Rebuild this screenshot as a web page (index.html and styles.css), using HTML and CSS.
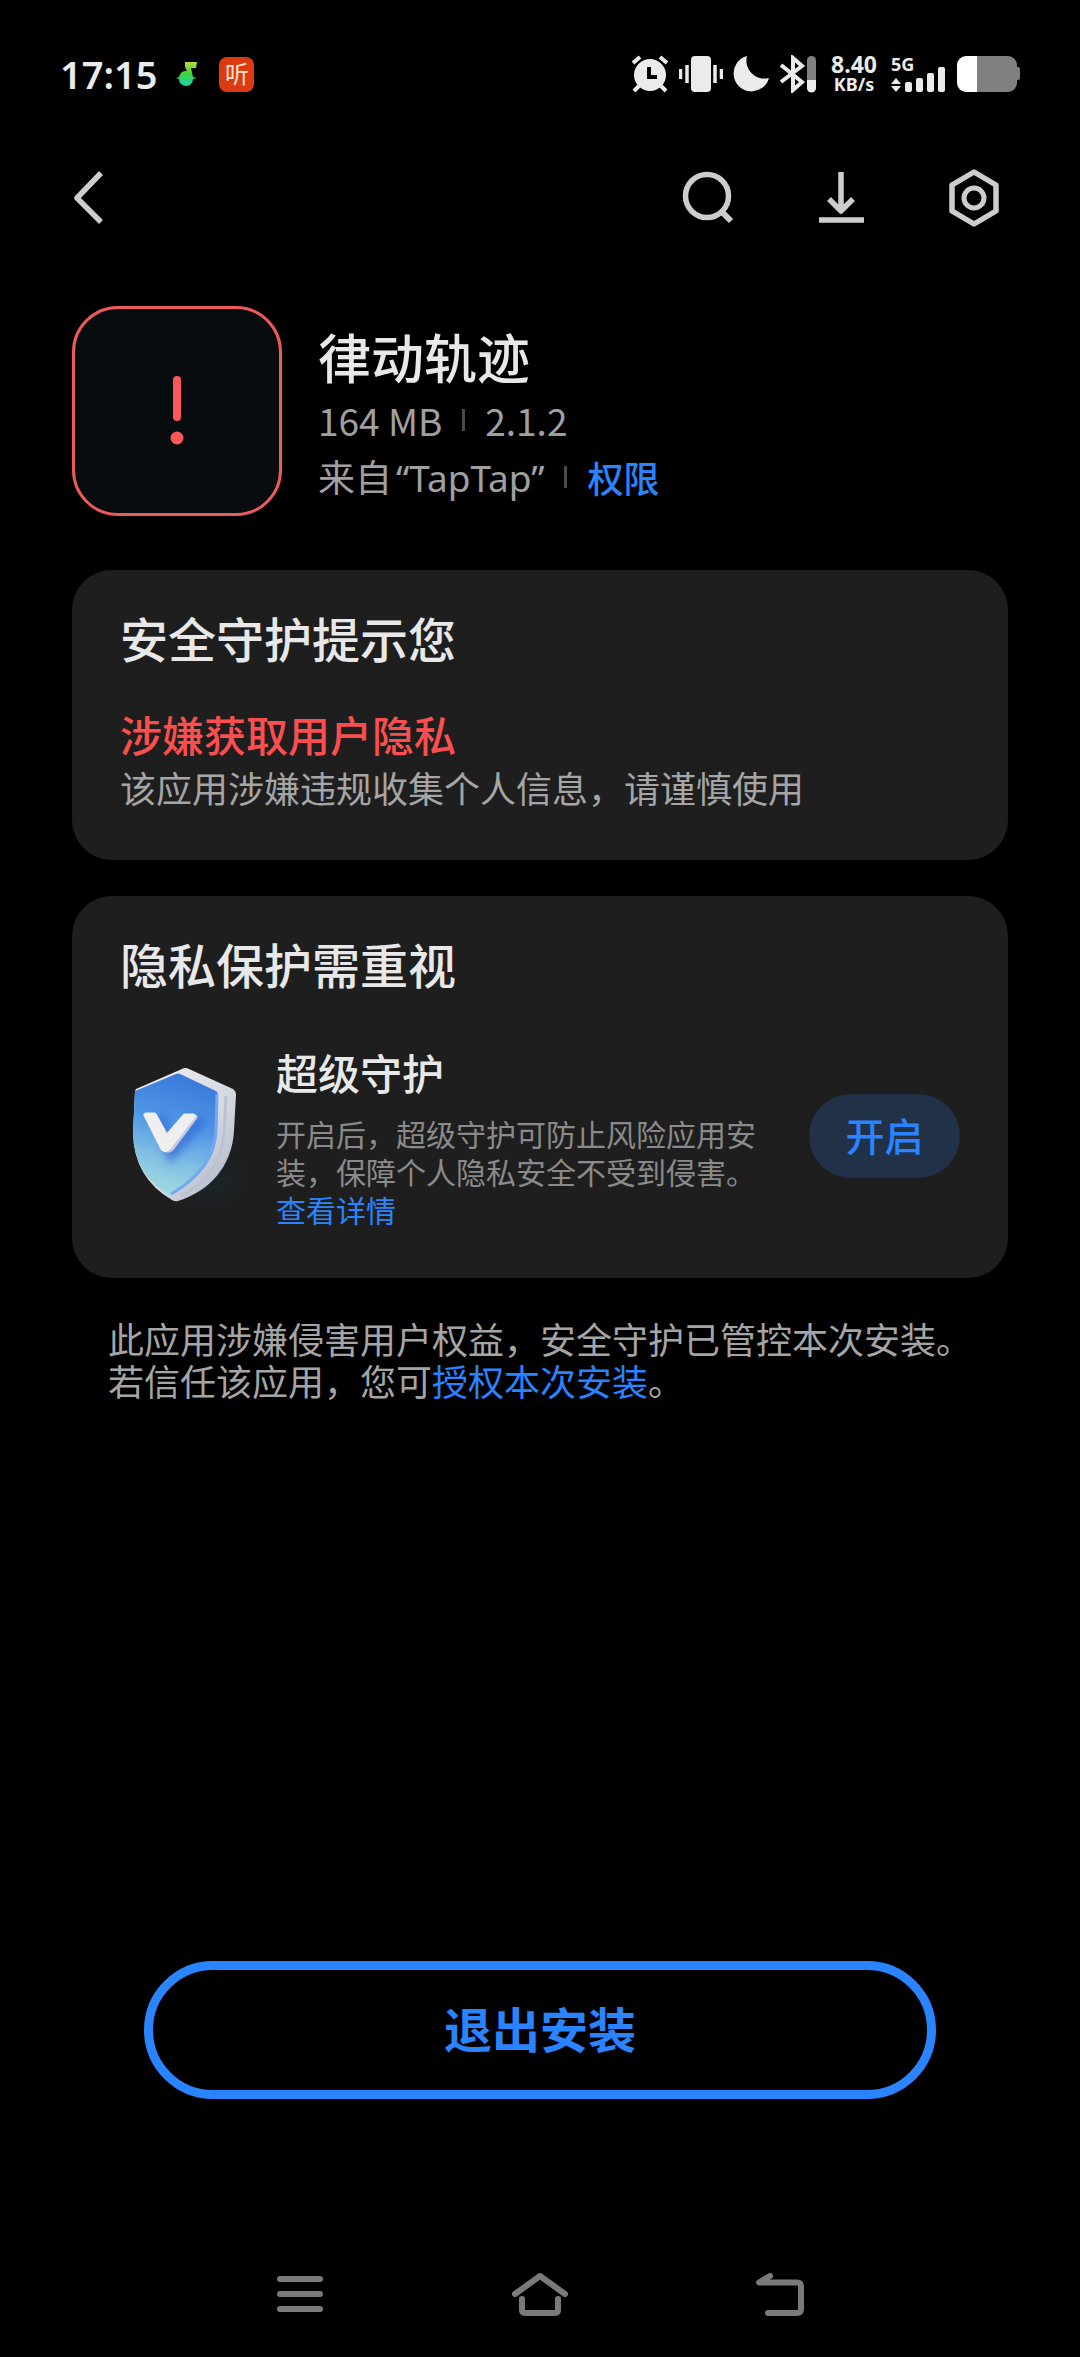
FILE: index.html
```html
<!DOCTYPE html>
<html lang="zh-CN">
<head>
    <meta charset="UTF-8">
    <meta name="viewport" content="width=device-width, initial-scale=1.0">
    <title>律动轨迹</title>
    <link rel="stylesheet" href="styles.css">
</head>
<body>

<!-- 状态栏 -->
<div class="status-bar">
    <div class="status-left">
        <span class="time">17:15</span>
        <svg class="music-icon" width="34" height="34" viewBox="0 0 34 34">
            <defs>
                <linearGradient id="note" x1="0" y1="0" x2="0" y2="1">
                    <stop offset="0" stop-color="#b4dc3c"/>
                    <stop offset="0.5" stop-color="#3fd23c"/>
                    <stop offset="1" stop-color="#1fd0b4"/>
                </linearGradient>
            </defs>
            <path fill="url(#note)" d="M14 5h12l-1 6h-5l2 9 4 1-4 1a7 7 0 0 1-14 0l-3-1 3-1a7 7 0 0 1 8-6l-2-4z"/>
        </svg>
        <span class="listen-icon">听</span>
    </div>
    <div class="status-right">
        <svg width="38" height="38" viewBox="0 0 38 38">
            <circle cx="19" cy="20" r="16" fill="#ebebeb"/>
            <path d="M2 8l7-6M36 8l-7-6M8 31l-5 5M30 31l5 5" stroke="#ebebeb" stroke-width="4" fill="none"/>
            <path d="M18 12v10h8" stroke="#000" stroke-width="4" fill="none"/>
        </svg>
        <svg width="44" height="38" viewBox="0 0 44 38">
            <rect x="12" y="1" width="20" height="36" rx="4" fill="#ebebeb"/>
            <path d="M1.500 14v10M8 10v18M36 10v18M42.500 14v10" stroke="#ebebeb" stroke-width="3.500"/>
        </svg>
        <svg width="37" height="38" viewBox="0 0 37 38">
            <path fill="#ebebeb" d="M14 1A18 18 0 1 0 36 23 18 18 0 0 1 14 1z"/>
        </svg>
        <svg width="37" height="38" viewBox="0 0 37 38">
            <path d="M1 10l21 17-9 8V3l9 8L1 27" stroke="#ebebeb" stroke-width="4" fill="none"/>
            <rect x="27" y="1" width="9" height="36" rx="4.500" fill="#808080"/>
            <path fill="#ebebeb" d="M27 25h9v8a4.500 4.500 0 0 1-9 0z"/>
        </svg>
        <div class="net-speed">
            <span class="speed-value">8.40</span>
            <span class="speed-unit">KB/s</span>
        </div>
        <div class="signal">
            <span class="signal-type">5G</span>
            <svg width="55" height="38" viewBox="0 0 55 38">
                <path fill="#ebebeb" d="M0 29l5-6 5 6zM0 31l5 6 5-6z"/>
                <g fill="#ebebeb">
                    <rect x="14" y="27" width="7" height="10" rx="2"/>
                    <rect x="25" y="23" width="7" height="14" rx="2"/>
                    <rect x="36" y="18" width="7" height="19" rx="2"/>
                    <rect x="47" y="12" width="7" height="25" rx="2"/>
                </g>
            </svg>
        </div>
        <svg width="64" height="38" viewBox="0 0 64 38">
            <path fill="#808080" d="M20 1h32a9 9 0 0 1 9 9v2h1a2 2 0 0 1 2 2v9a2 2 0 0 1-2 2h-1v3a9 9 0 0 1-9 9H20z"/>
            <path fill="#fff" d="M21 1H10a9 9 0 0 0-9 9v18a9 9 0 0 0 9 9h11z"/>
        </svg>
    </div>
</div>

<!-- 顶部工具栏 -->
<header class="toolbar">
    <button class="icon-button" aria-label="返回">
        <svg width="60" height="60" viewBox="0 0 60 60"><path d="M31 5L7 30l24 24" stroke-width="5.500"/></svg>
    </button>
    <div class="toolbar-actions">
        <button class="icon-button" aria-label="搜索">
            <svg width="60" height="60" viewBox="0 0 60 60"><circle cx="29" cy="28" r="21.500" stroke-width="5.500"/><path d="M44 44l9 9" stroke-width="6"/></svg>
        </button>
        <button class="icon-button" aria-label="下载">
            <svg width="60" height="60" viewBox="0 0 60 60"><path d="M30 4v37M18 31l12 12 12-12M8 52h45" stroke-width="5.500"/></svg>
        </button>
        <button class="icon-button" aria-label="设置">
            <svg width="60" height="60" viewBox="0 0 60 60"><path d="M30 4l22 13v26L30 56 8 43V17z" stroke-width="5.500"/><circle cx="30" cy="30" r="10" stroke-width="5"/></svg>
        </button>
    </div>
</header>

<main class="content">
    <!-- 应用信息 -->
    <section class="app-info">
        <div class="app-icon">
            <svg width="14" height="72" viewBox="0 0 14 72"><rect x="3" y="1" width="8" height="45" rx="4"/><circle cx="7" cy="63" r="6.500"/></svg>
        </div>
        <div class="app-text">
            <h1>律动轨迹</h1>
            <p class="meta"><span>164 MB</span><i class="divider"></i><span>2.1.2</span></p>
            <p class="meta"><span>来自<span class="latin">“TapTap”</span></span><i class="divider"></i><a href="#">权限</a></p>
        </div>
    </section>

    <!-- 安全提示 -->
    <section class="card">
        <h2>安全守护提示您</h2>
        <p class="risk-title">涉嫌获取用户隐私</p>
        <p class="risk-text">该应用涉嫌违规收集个人信息，请谨慎使用</p>
    </section>

    <!-- 超级守护 -->
    <section class="card">
        <h2>隐私保护需重视</h2>
        <div class="guard">
            <svg class="shield" width="130" height="150" viewBox="10 20 130 150">
                <defs>
                    <linearGradient id="edge" x1="0" y1="0" x2="1" y2="1">
                        <stop offset="0" stop-color="#f2f2f2"/>
                        <stop offset="0.600" stop-color="#d3d7e0"/>
                        <stop offset="1" stop-color="#a9aec6"/>
                    </linearGradient>
                    <linearGradient id="face" x1="0.600" y1="0" x2="0.400" y2="1">
                        <stop offset="0" stop-color="#3878d8"/>
                        <stop offset="0.400" stop-color="#4f96e6"/>
                        <stop offset="0.750" stop-color="#86c3e4"/>
                        <stop offset="1" stop-color="#a2dcdc"/>
                    </linearGradient>
                    <radialGradient id="glow">
                        <stop offset="0" stop-color="#17384a" stop-opacity="0.300"/>
                        <stop offset="1" stop-color="#17384a" stop-opacity="0"/>
                    </radialGradient>
                    <filter id="soft" x="-50%" y="-50%" width="200%" height="200%"><feGaussianBlur stdDeviation="4"/></filter>
                    <clipPath id="faceClip"><path d="M25 50L66 33Q68 32 70 33L106 50Q108 51 108 54L107 90Q106 130 61 155 24 135 23 92z"/></clipPath>
                </defs>
                <ellipse cx="98" cy="138" rx="42" ry="30" fill="url(#glow)"/>
                <path fill="url(#edge)" d="M26 48L72 28Q75 26 79 28L123 48Q126 50 126 54L124 90C122 125 100 150 68 160Q65 161 62 159 24 137 23 92L25 50z"/>
                <path fill="none" stroke="#bcc2d0" stroke-width="3" d="M116 55L114 92C112 122 95 143 70 155"/>
                <path fill="url(#face)" d="M25 50L66 33Q68 32 70 33L106 50Q108 51 108 54L107 90Q106 130 61 155 24 135 23 92z"/>
                <path clip-path="url(#faceClip)" fill="none" stroke="#2862d6" stroke-width="12" stroke-opacity="0.650" filter="url(#soft)" d="M50 76l12 36 30-34"/>
                <path fill="none" stroke="#76a7ef" stroke-width="3" d="M107 53L106 90Q104 128 61 153"/>
                <g stroke-width="5" stroke-linejoin="round">
                    <path fill="#c3cbdc" stroke="#c3cbdc" d="M38 75h7l13 23 18-22h9L62 107q-4 4-8 0z"/>
                    <path fill="#efefef" stroke="#efefef" d="M36 74h8l12 23 19-22h8L59 106q-4 5-7 0z"/>
                </g>
            </svg>
            <div class="guard-text">
                <h3>超级守护</h3>
                <p>开启后，超级守护可防止风险应用安装，保障个人隐私安全不受到侵害。<a href="#">查看详情</a></p>
            </div>
            <button class="enable-button">开启</button>
        </div>
    </section>

    <p class="notice">此应用涉嫌侵害用户权益，安全守护已管控本次安装。若信任该应用，您可<a href="#">授权本次安装</a>。</p>

    <button class="exit-button">退出安装</button>
</main>

<!-- 系统导航栏 -->
<nav class="nav-bar">
    <button class="nav-button" aria-label="最近任务">
        <svg width="60" height="60" viewBox="0 0 60 60"><path d="M10 15h40M10 30h40M10 45h40"/></svg>
    </button>
    <button class="nav-button" aria-label="主页">
        <svg width="60" height="60" viewBox="0 0 60 60"><path d="M5 30L30 12l25 18M12 35v11q0 3 4 3h28q4 0 4-3V35"/></svg>
    </button>
    <button class="nav-button" aria-label="返回上一页">
        <svg width="60" height="60" viewBox="0 0 60 60"><path d="M20 12L9 18.500h38q4 0 4 4V45q0 4-4 4H18"/></svg>
    </button>
</nav>

</body>
</html>
```

FILE: styles.css
```css
* {
    box-sizing: border-box;
}

body {
    margin: 0;
    min-height: 100vh;
    display: flex;
    flex-direction: column;
    background-color: #000;
    color: #e8e8e8;
    font-family: "Noto Sans CJK SC", sans-serif;
}

h1, h2, h3, p {
    margin: 0;
    font-weight: 500;
}

a {
    color: #2a84ff;
    text-decoration: none;
}

button {
    border: none;
    padding: 0;
    background: none;
    color: #2a84ff;
    font-family: inherit;
    cursor: pointer;
}

svg {
    display: block;
    flex-shrink: 0;
}

/* 状态栏 */
.status-bar {
    display: flex;
    justify-content: space-between;
    align-items: center;
    height: 148px;
    padding: 0 60px;
    color: #ebebeb;
}

.status-left, .status-right {
    display: flex;
    align-items: center;
}

.status-left {
    gap: 14px;
}

.status-right {
    gap: 10px;
}

.time {
    font-family: "Noto Sans", sans-serif;
    font-size: 38px;
    font-weight: 600;
    line-height: 40px;
}

.listen-icon {
    width: 35px;
    height: 35px;
    border-radius: 8px;
    background-color: #dc3a10;
    color: #ffe0d0;
    font-size: 24px;
    line-height: 32px;
    text-align: center;
}

.net-speed {
    display: flex;
    flex-direction: column;
    align-items: center;
    margin: 0 4px;
    font-family: "Noto Sans", sans-serif;
    font-weight: 700;
}

.speed-value {
    font-size: 23px;
    line-height: 20px;
}

.speed-unit {
    font-size: 18px;
    line-height: 20px;
}

.signal {
    position: relative;
}

.signal-type {
    position: absolute;
    top: 0;
    left: 0;
    font-family: "Noto Sans", sans-serif;
    font-size: 18px;
    font-weight: 700;
    line-height: 18px;
}

/* 工具栏 */
.toolbar {
    display: flex;
    justify-content: space-between;
    align-items: center;
    height: 100px;
    padding: 0 76px 0 70px;
}

.toolbar-actions {
    display: flex;
    gap: 73px;
}

.icon-button svg {
    fill: none;
    stroke: #cdcdcd;
    stroke-linejoin: round;
}

/* 主体 */
.content {
    flex: 1;
    display: flex;
    flex-direction: column;
    padding: 58px 72px 132px;
}

.app-info {
    display: flex;
    align-items: center;
    gap: 36px;
    margin-bottom: 54px;
}

.app-icon {
    display: flex;
    justify-content: center;
    align-items: center;
    width: 210px;
    height: 210px;
    border: 3px solid #ec5a5c;
    border-radius: 46px;
    background-color: #090c0e;
}

.app-icon svg {
    fill: #f9575a;
}

.app-text {
    padding-top: 4px;
}

h1 {
    font-size: 53px;
    line-height: 72px;
}

.meta {
    display: flex;
    align-items: center;
    color: #a0a0a0;
    font-size: 37px;
    font-weight: 400;
    line-height: 56px;
}

.meta a {
    font-size: 36px;
    font-weight: 500;
}

.latin {
    margin-left: 4px;
    font-family: "Noto Sans", sans-serif;
}

.divider {
    width: 3px;
    height: 22px;
    margin: 0 20px;
    background-color: #4a4a4a;
}

/* 卡片 */
.card {
    margin-bottom: 36px;
    padding: 36px 48px 48px;
    border-radius: 40px;
    background-color: #1e1e1e;
}

h2 {
    margin-bottom: 38px;
    font-size: 48px;
    line-height: 62px;
}

.risk-title {
    color: #fb4f4f;
    font-size: 42px;
    line-height: 56px;
}

.risk-text {
    color: #a5a5a5;
    font-size: 36px;
    font-weight: 400;
    line-height: 50px;
}

.guard {
    display: flex;
    align-items: center;
    padding: 12px 0 2px;
}

.guard-text {
    flex: 1;
    padding: 0 40px 0 26px;
}

h3 {
    margin-bottom: 14px;
    font-size: 42px;
    line-height: 56px;
}

.guard-text p {
    color: #8a8a8a;
    font-size: 30px;
    font-weight: 400;
    line-height: 38px;
}

.enable-button {
    width: 151px;
    height: 84px;
    padding-bottom: 4px;
    border-radius: 42px;
    background-color: #203148;
    font-size: 39px;
    font-weight: 500;
}

/* 说明文字 */
.notice {
    padding: 3px 24px 0 36px;
    color: #a5a5a5;
    font-size: 36px;
    font-weight: 400;
    line-height: 42px;
}

.exit-button {
    height: 138px;
    margin: auto 72px 0;
    padding-bottom: 6px;
    border: 9px solid #2a84ff;
    border-radius: 69px;
    font-size: 48px;
    font-weight: 700;
}

/* 导航栏 */
.nav-bar {
    display: flex;
    justify-content: center;
    align-items: center;
    gap: 180px;
    height: 126px;
}

.nav-button svg {
    fill: none;
    stroke: #7a7a7a;
    stroke-width: 6px;
    stroke-linecap: round;
    stroke-linejoin: round;
}
```
